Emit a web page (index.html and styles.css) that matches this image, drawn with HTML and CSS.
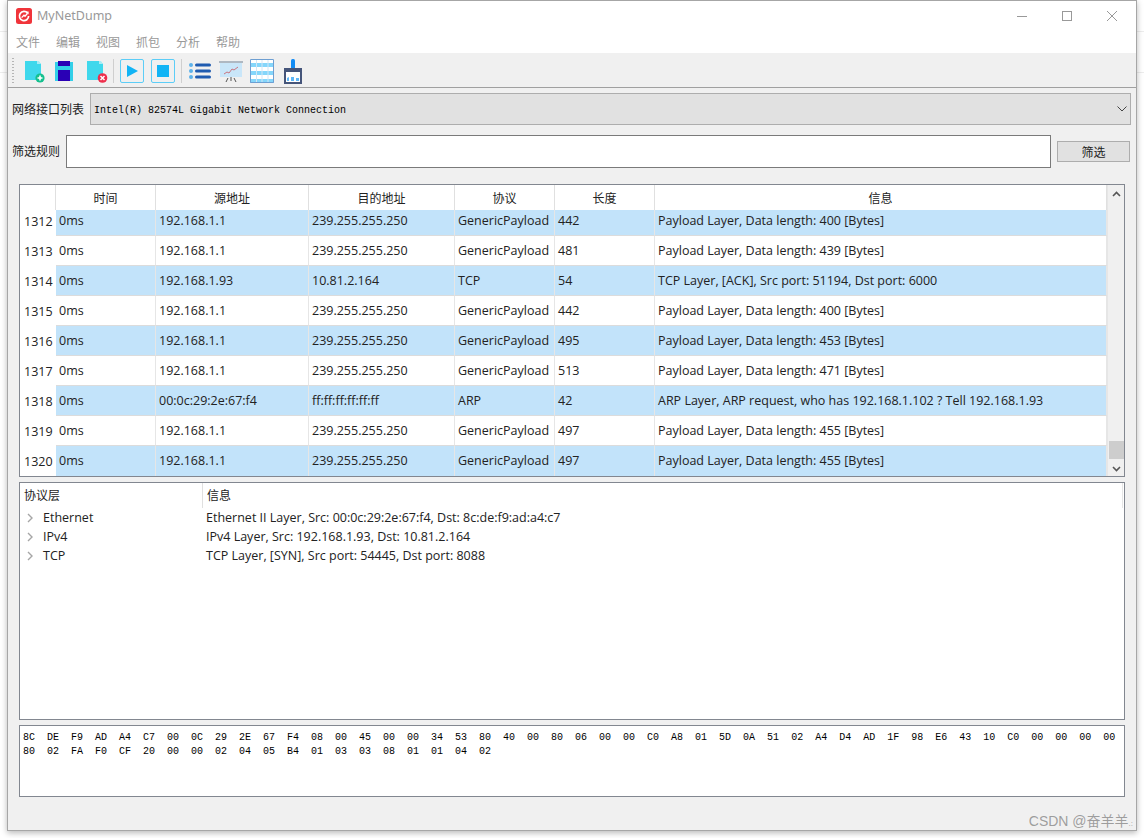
FILE: index.html
```html
<!DOCTYPE html>
<html lang="zh">
<head>
<meta charset="utf-8">
<title>MyNetDump</title>
<link rel="stylesheet" href="styles.css">
</head>
<body>
<div class="window">
  <header class="titlebar">
    <svg class="logo" viewBox="0 0 16 16" width="16" height="16"><rect width="16" height="16" rx="2.5" fill="#f0343a"/><path d="M11.6 5.2A4.6 4.6 0 1 0 12.6 8" fill="none" stroke="#fff" stroke-width="1.7"/><path d="M5.6 9.6 8 7.2l1 1 2.6-3" fill="none" stroke="#fff" stroke-width="1.3"/><path d="M9.6 3.6h3v3z" fill="#fff"/></svg>
    <span class="app-name">MyNetDump</span>
    <div class="win-controls">
      <svg width="12" height="12" viewBox="0 0 12 12"><path d="M1 6.5h10" stroke="#999" fill="none"/></svg>
      <svg width="12" height="12" viewBox="0 0 12 12"><rect x="1.5" y="1.5" width="9" height="9" stroke="#999" fill="none"/></svg>
      <svg width="12" height="12" viewBox="0 0 12 12"><path d="M1 1l10 10M11 1L1 11" stroke="#999" fill="none"/></svg>
    </div>
  </header>
  <nav class="menubar"><span>文件</span><span>编辑</span><span>视图</span><span>抓包</span><span>分析</span><span>帮助</span></nav>
  <div class="toolbar">
    <span class="grip"></span>
    <svg class="ic ic-new" width="20" height="23" viewBox="0 0 20 23"><path d="M0 1h13l3 3v16H0z" fill="#3fd8ec"/><path d="M12 1h2l2 3h-4z" fill="#a8ecf5"/><circle cx="15" cy="18" r="4.6" fill="#14c08e"/><path d="M12.5 18h5M15 15.5v5" stroke="#fff" stroke-width="1.6"/></svg>
    <svg class="ic ic-save" width="19" height="20" viewBox="0 0 19 20"><path d="M0 1h18v19H0z" fill="#33cfe8"/><rect x="3" y="0" width="12" height="5" fill="#2a00b5"/><rect x="3" y="9" width="12" height="11" fill="#2a00b5"/></svg>
    <svg class="ic ic-del" width="21" height="23" viewBox="0 0 21 23"><path d="M0 1h13l3 3v16H0z" fill="#3fd8ec"/><path d="M12 1h2l2 3h-4z" fill="#a8ecf5"/><circle cx="15.5" cy="18" r="4.8" fill="#ee2f4c"/><path d="M13.5 16l4 4M17.5 16l-4 4" stroke="#fff" stroke-width="1.5"/></svg>
    <span class="tool-sep sep-a"></span>
    <span class="tool-btn"><svg width="14" height="14" viewBox="0 0 14 14"><path d="M2 1l11 6-11 6z" fill="#12b4f5"/></svg></span>
    <span class="tool-btn tool-stop"><svg width="14" height="14" viewBox="0 0 14 14"><rect x="1" y="1" width="12" height="12" fill="#12b4f5"/></svg></span>
    <span class="tool-sep sep-b"></span>
    <svg class="ic ic-list" width="22" height="18" viewBox="0 0 22 18"><g fill="#5db2ea"><circle cx="2" cy="3" r="2"/><circle cx="2" cy="9" r="2"/><circle cx="2" cy="15" r="2"/></g><g fill="#1f5bb0"><rect x="6" y="1.5" width="16" height="3" rx="1.5"/><rect x="6" y="7.5" width="16" height="3" rx="1.5"/><rect x="6" y="13.5" width="16" height="3" rx="1.5"/></g></svg>
    <svg class="ic ic-chart" width="24" height="23" viewBox="0 0 24 23"><rect x="0" y="1" width="24" height="2" fill="#aeb8c2"/><rect x="1" y="3" width="22" height="14" fill="#c9e6f9"/><path d="M5 14l3-2 2 1 3-4 2 1 4-3" fill="none" stroke="#c9747f"/><path d="M7 22l2-4M17 22l-2-4M12 17v4" stroke="#555" fill="none"/></svg>
    <svg class="ic ic-grid" width="24" height="24" viewBox="0 0 24 24"><rect width="24" height="24" fill="#fff"/><path d="M0 4h24v4H0zM0 12h24v4H0zM0 20h24v4H0z" fill="#84d6fb"/><path d="M6.5 0v24M12 0v24M18 0v24" fill="none" stroke="#d3e6f5"/><path d="M.5.5h23v23H.5z" fill="none" stroke="#6e9fd2"/></svg>
    <svg class="ic ic-brush" width="18" height="25" viewBox="0 0 18 25"><rect x="7" y="0" width="4" height="10" rx="1.5" fill="#128cf5"/><path d="M1 12h16v12H1z" fill="#fff" stroke="#45557a" stroke-width="2"/><rect x="0" y="9" width="18" height="4" fill="#45557a"/><path d="M3 22v-3l2-1v4zM7 22v-4h3v4zM12 22v-3h3v3z" fill="#5fb7f7"/></svg>
  </div>
  <main class="content">
    <div class="form-row iface-row">
      <label class="form-label">网络接口列表</label>
      <div class="combo"><span class="mono combo-text">Intel(R) 82574L Gigabit Network Connection</span><svg width="10" height="6" viewBox="0 0 10 6"><path d="M.5.5 5 5 9.5.5" fill="none" stroke="#444"/></svg></div>
    </div>
    <div class="form-row filter-row">
      <label class="form-label filter-label">筛选规则</label>
      <div class="filter-input"></div>
      <button class="filter-btn">筛选</button>
    </div>
    <section class="packets">
      <div class="packet-table">
        <div class="row head"><i></i><b>时间</b><b>源地址</b><b>目的地址</b><b>协议</b><b>长度</b><b>信息</b></div>
        <div class="row odd first"><i>1312</i><span>0ms</span><span>192.168.1.1</span><span>239.255.255.250</span><span>GenericPayload</span><span>442</span><span>Payload Layer, Data length: 400 [Bytes]</span></div>
        <div class="row"><i>1313</i><span>0ms</span><span>192.168.1.1</span><span>239.255.255.250</span><span>GenericPayload</span><span>481</span><span>Payload Layer, Data length: 439 [Bytes]</span></div>
        <div class="row odd"><i>1314</i><span>0ms</span><span>192.168.1.93</span><span>10.81.2.164</span><span>TCP</span><span>54</span><span>TCP Layer, [ACK], Src port: 51194, Dst port: 6000</span></div>
        <div class="row"><i>1315</i><span>0ms</span><span>192.168.1.1</span><span>239.255.255.250</span><span>GenericPayload</span><span>442</span><span>Payload Layer, Data length: 400 [Bytes]</span></div>
        <div class="row odd"><i>1316</i><span>0ms</span><span>192.168.1.1</span><span>239.255.255.250</span><span>GenericPayload</span><span>495</span><span>Payload Layer, Data length: 453 [Bytes]</span></div>
        <div class="row"><i>1317</i><span>0ms</span><span>192.168.1.1</span><span>239.255.255.250</span><span>GenericPayload</span><span>513</span><span>Payload Layer, Data length: 471 [Bytes]</span></div>
        <div class="row odd"><i>1318</i><span>0ms</span><span>00:0c:29:2e:67:f4</span><span>ff:ff:ff:ff:ff:ff</span><span>ARP</span><span>42</span><span>ARP Layer, ARP request, who has 192.168.1.102 ? Tell 192.168.1.93</span></div>
        <div class="row"><i>1319</i><span>0ms</span><span>192.168.1.1</span><span>239.255.255.250</span><span>GenericPayload</span><span>497</span><span>Payload Layer, Data length: 455 [Bytes]</span></div>
        <div class="row odd last"><i>1320</i><span>0ms</span><span>192.168.1.1</span><span>239.255.255.250</span><span>GenericPayload</span><span>497</span><span>Payload Layer, Data length: 455 [Bytes]</span></div>
      </div>
      <div class="scrollbar">
        <svg width="9" height="6" viewBox="0 0 9 6"><path d="M1 5 4.5 1.5 8 5" fill="none" stroke="#555" stroke-width="1.6"/></svg>
        <span class="thumb"></span>
        <svg width="9" height="6" viewBox="0 0 9 6"><path d="M1 1 4.5 4.5 8 1" fill="none" stroke="#555" stroke-width="1.6"/></svg>
      </div>
    </section>
    <section class="tree">
      <div class="tree-head"><b>协议层</b><b>信息</b></div>
      <div class="tree-row"><svg width="6" height="10" viewBox="0 0 6 10"><path d="M1 1l4 4-4 4" fill="none" stroke="#a6a6a6" stroke-width="1.4"/></svg><span>Ethernet</span><span>Ethernet II Layer, Src: 00:0c:29:2e:67:f4, Dst: 8c:de:f9:ad:a4:c7</span></div>
      <div class="tree-row"><svg width="6" height="10" viewBox="0 0 6 10"><path d="M1 1l4 4-4 4" fill="none" stroke="#a6a6a6" stroke-width="1.4"/></svg><span>IPv4</span><span>IPv4 Layer, Src: 192.168.1.93, Dst: 10.81.2.164</span></div>
      <div class="tree-row"><svg width="6" height="10" viewBox="0 0 6 10"><path d="M1 1l4 4-4 4" fill="none" stroke="#a6a6a6" stroke-width="1.4"/></svg><span>TCP</span><span>TCP Layer, [SYN], Src port: 54445, Dst port: 8088</span></div>
    </section>
    <pre class="hex mono">8C  DE  F9  AD  A4  C7  00  0C  29  2E  67  F4  08  00  45  00  00  34  53  80  40  00  80  06  00  00  C0  A8  01  5D  0A  51  02  A4  D4  AD  1F  98  E6  43  10  C0  00  00  00  00
80  02  FA  F0  CF  20  00  00  02  04  05  B4  01  03  03  08  01  01  04  02</pre>
  </main>
  <div class="watermark">CSDN @奋羊羊<span class="wm-dots">.:</span></div>
</div>
</body>
</html>
```
FILE: styles.css
```css
* { box-sizing: border-box; }
html, body { margin: 0; padding: 0; }
body {
  width: 1144px;
  height: 838px;
  overflow: hidden;
  background:
    linear-gradient(#ededed, #ededed) 0 31px / 100% 1px no-repeat,
    linear-gradient(#ededed, #ededed) 0 72px / 100% 1px no-repeat,
    #fff;
  font-family: "Open Sans", "Noto Sans CJK SC", sans-serif;
  font-size: 12px;
  color: #222;
}
.window {
  position: relative;
  margin-left: 7px;
  width: 1130px;
  height: 831px;
  background: #f0f0f0;
  border: 1px solid #a6a6a6;
  box-shadow: 0 2px 6px rgba(0, 0, 0, .28);
  display: flex;
  flex-direction: column;
}
.titlebar {
  height: 30px;
  background: #fff;
  display: flex;
  align-items: center;
  padding-left: 8px;
  flex: none;
}
.app-name {
  margin-left: 5px;
  margin-bottom: 1px;
  font-size: 12.5px;
  color: #999;
  font-family: "Noto Sans", sans-serif;
}
.win-controls {
  margin-left: auto;
  display: flex;
  gap: 33px;
  padding: 0 18px 1px 0;
}
.menubar {
  height: 23px;
  background: #fff;
  display: flex;
  align-items: center;
  padding-left: 8px;
  gap: 16px;
  color: #999;
  flex: none;
  border-bottom: 1px solid #f0f0f0;
}
.menubar span { width: 24px; }
.toolbar {
  height: 34px;
  background: #f0f0f0;
  border-bottom: 1px solid #a0a0a0;
  display: flex;
  align-items: center;
  padding: 1px 0 0 4px;
  flex: none;
}
.grip {
  width: 2px;
  height: 26px;
  background: repeating-linear-gradient(#b5b5b5 0 1px, transparent 1px 3px);
}
.ic { flex: none; }
.ic-new { margin-left: 11px; }
.ic-save { margin-left: 10px; }
.ic-del { margin-left: 13px; }
.tool-sep { width: 1px; height: 24px; background: #cfcfcf; flex: none; }
.sep-a { margin-left: 5px; }
.sep-b { margin-left: 6px; }
.tool-btn {
  width: 24px;
  height: 24px;
  border: 1px solid #5ccdf7;
  border-radius: 2px;
  display: flex;
  align-items: center;
  justify-content: center;
  flex: none;
  margin-left: 6px;
}
.tool-stop { margin-left: 7px; }
.ic-list { margin-left: 7px; }
.ic-chart { margin-left: 8px; }
.ic-grid { margin-left: 7px; }
.ic-brush { margin-left: 10px; }
.content {
  flex: 1;
  display: flex;
  flex-direction: column;
  padding: 5px 5px 0 4px;
  min-height: 0;
}
.mono { font-family: "Liberation Mono", monospace; font-size: 10px; color: #000; }
.form-row { display: flex; align-items: center; }
.form-label { font-size: 12px; color: #222; }
.filter-label { margin-bottom: 2px; }
.iface-row { height: 32px; gap: 6px; }
.combo {
  flex: 1;
  height: 32px;
  background: #e1e1e1;
  border: 1px solid #adadad;
  display: flex;
  align-items: center;
  justify-content: space-between;
  padding: 0 3px;
}
.combo-text { margin-top: 2px; }
.filter-row { height: 33px; margin-top: 10px; }
.filter-input {
  width: 985px;
  height: 33px;
  margin-left: 6px;
  background: #fff;
  border: 1px solid #7a7a7a;
}
.filter-btn {
  width: 73px;
  height: 21px;
  margin-left: 6px;
  padding: 0;
  background: #e1e1e1;
  border: 1px solid #adadad;
  font: inherit;
  font-size: 12px;
  color: #222;
}
.packets {
  margin: 16px 6px 0 7px;
  height: 293px;
  border: 1px solid #828790;
  background: #fff;
  display: flex;
  flex: none;
}
.packet-table { width: 1087px; flex: none; }
.row {
  display: grid;
  grid-template-columns: 36px 100px 153px 146px 100px 100px 452px;
  height: 30px;
  font-size: 12.5px;
}
.row > * { font-style: normal; font-weight: 400; display: flex; align-items: center; }
.row > span {
  background: #fff;
  padding: 0 0 1px 3px;
  border-right: 1px solid #e6e6e6;
  border-bottom: 1px solid #dcdcdc;
  white-space: nowrap;
}
.row > i { padding-left: 4px; background: #fff; }
.row.odd > span { background: #c2e3fa; }
.row.first { height: 26px; }
.row.first > span { padding-bottom: 4px; }
.row.first > i { padding-bottom: 3px; }
.row.last > span { border-bottom: 0; }
.head { height: 25px; font-size: 12px; }
.head > b {
  justify-content: center;
  border-right: 1px solid #e0e0e0;
  padding-bottom: 1px;
  font-family: "Noto Sans CJK SC", sans-serif;
}
.head > i { border-right: 1px solid #e0e0e0; }
.scrollbar {
  flex: 1;
  background: #f0f0f0;
  border-left: 1px solid #e6e6e6;
  display: flex;
  flex-direction: column;
  align-items: center;
  padding-top: 6px;
}
.thumb { width: 15px; height: 18px; background: #cdcdcd; margin-top: 244px; margin-bottom: 7px; }
.tree {
  margin: 5px 6px 0 7px;
  height: 238px;
  border: 1px solid #828790;
  background: #fff;
  flex: none;
}
.tree-head {
  height: 25px;
  display: grid;
  grid-template-columns: 183px 1fr;
  border-right: 1px solid #e6e6e6;
  margin-right: 1px;
}
.tree-head b {
  font-weight: 400;
  padding: 0 0 2px 4px;
  display: flex;
  align-items: center;
  font-family: "Noto Sans CJK SC", sans-serif;
}
.tree-head b:first-child { border-right: 1px solid #e0e0e0; }
.tree-row {
  height: 19px;
  display: grid;
  grid-template-columns: 6px 153px 1fr;
  align-items: center;
  padding-left: 7px;
  column-gap: 10px;
  white-space: nowrap;
  font-size: 12.5px;
}
.hex {
  margin: 5px 6px 0 7px;
  height: 72px;
  border: 1px solid #828790;
  background: #fff;
  padding: 5px 3px;
  line-height: 14px;
  flex: none;
  overflow: hidden;
}
.watermark {
  position: absolute;
  right: 3px;
  bottom: 0;
  font-family: "Liberation Sans", "Noto Sans CJK SC", sans-serif;
  font-size: 14px;
  color: rgba(130, 130, 130, .75);
}
.wm-dots { font-size: 8px; }
```
